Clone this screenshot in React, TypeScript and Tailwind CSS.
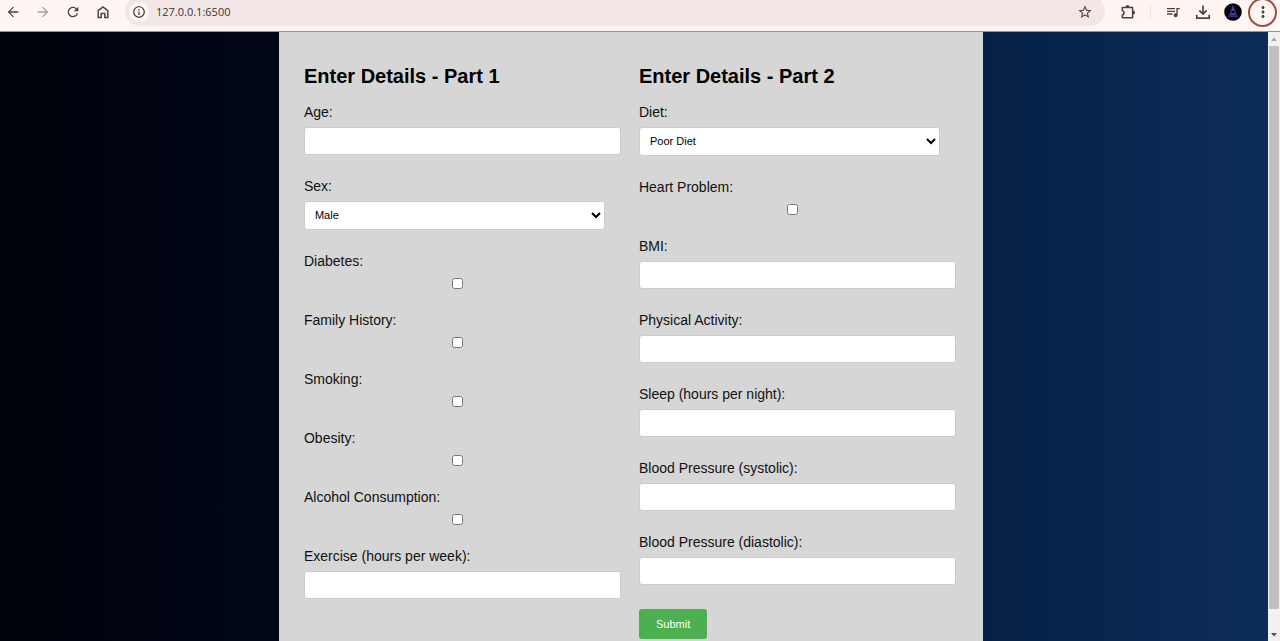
import React from "react";
import { MdArrowBack, MdArrowForward, MdRefresh, MdInfoOutline, MdStarBorder, MdQueueMusic, MdMoreVert } from "react-icons/md";

type FieldKind = "text" | "select" | "checkbox";

interface FieldSpec {
  id: string;
  label: string;
  kind: FieldKind;
  options?: string[];
}

const partOne: FieldSpec[] = [
  { id: "age", label: "Age:", kind: "text" },
  { id: "sex", label: "Sex:", kind: "select", options: ["Male", "Female"] },
  { id: "diabetes", label: "Diabetes:", kind: "checkbox" },
  { id: "family-history", label: "Family History:", kind: "checkbox" },
  { id: "smoking", label: "Smoking:", kind: "checkbox" },
  { id: "obesity", label: "Obesity:", kind: "checkbox" },
  { id: "alcohol", label: "Alcohol Consumption:", kind: "checkbox" },
  { id: "exercise", label: "Exercise (hours per week):", kind: "text" },
];

const partTwo: FieldSpec[] = [
  { id: "diet", label: "Diet:", kind: "select", options: ["Poor Diet", "Average Diet", "Healthy Diet"] },
  { id: "heart-problem", label: "Heart Problem:", kind: "checkbox" },
  { id: "bmi", label: "BMI:", kind: "text" },
  { id: "activity", label: "Physical Activity:", kind: "text" },
  { id: "sleep", label: "Sleep (hours per night):", kind: "text" },
  { id: "systolic", label: "Blood Pressure (systolic):", kind: "text" },
  { id: "diastolic", label: "Blood Pressure (diastolic):", kind: "text" },
];

function Field({ id, label, kind, options = [] }: FieldSpec) {
  return (
    <div className="mb-[21px] flex flex-col">
      <label htmlFor={id} className="mb-[5px] text-sm leading-5 text-[#111]">
        {label}
      </label>
      {kind === "text" && (
        <input id={id} type="text" className="h-7 w-full rounded-[3px] border border-[#ccc] bg-white px-2 text-[11px]" />
      )}
      {kind === "select" && (
        <select id={id} className="h-[29px] w-[95%] rounded-[3px] border border-[#ccc] bg-white pr-1 pb-px pl-1.5 text-[11px] text-black">
          {options.map((o) => (
            <option key={o}>{o}</option>
          ))}
        </select>
      )}
      {kind === "checkbox" && (
        <div className="flex h-[13px] w-[97%] items-end justify-center">
          <input id={id} type="checkbox" className="size-[11px]" />
        </div>
      )}
    </div>
  );
}

function Column({ title, fields, children }: { title: string; fields: FieldSpec[]; children?: React.ReactNode }) {
  return (
    <section className="min-w-0">
      <h2 className="mb-3.5 text-xl leading-6 font-bold text-black">{title}</h2>
      {fields.map((f) => (
        <Field key={f.id} {...f} />
      ))}
      {children}
    </section>
  );
}

function HomeIcon() {
  return (
    <svg viewBox="0 0 16 16" className="size-4" fill="none" stroke="currentColor" strokeWidth="1.5">
      <path d="M3.2 6.600 8 2.900l4.800 3.700V13.400H9.800V9.400H6.200v4H3.200z" />
    </svg>
  );
}

function ExtensionIcon() {
  return (
    <svg viewBox="0 0 16 16" className="size-4" fill="none" stroke="currentColor" strokeWidth="1.500" strokeLinejoin="round">
      <path d="M2.300 3.500H12.600V13.800H2.300V10.900C4.700 10.500 4.700 6.800 2.300 6.400z" />
      <path d="M5.500 3.200a2 2.200 0 0 1 4 0zM12.900 6.600a2.200 2 0 0 1 0 4z" fill="currentColor" stroke="none" />
    </svg>
  );
}

function DownloadIcon() {
  return (
    <svg viewBox="0 0 16 16" className="size-4" fill="none" stroke="currentColor" strokeWidth="1.700">
      <path d="M8 1.500v8.300M4.300 6.300 8 10l3.700-3.700M1.800 10.800v3.300h12.400v-3.300" />
    </svg>
  );
}

function ProfilePicture() {
  return (
    <svg viewBox="0 0 18 18" className="size-[18px]">
      <circle cx="9" cy="9" r="8.800" fill="#06050f" />
      <path d="M9 3.200 6.200 11.500h5.600z" fill="none" stroke="#37358c" strokeWidth="1.300" />
      <path d="M4.500 13.200h9M6 10.500h6" stroke="#4442a5" strokeWidth="1.200" />
      <circle cx="9" cy="6.500" r="1" fill="#8a5c91" />
    </svg>
  );
}

function BrowserBar() {
  return (
    <header className="flex h-8 shrink-0 items-start overflow-hidden border-b border-[#9b9290] bg-[#fff6f4] text-[#55403b]">
      <nav className="flex h-6 w-[125px] shrink-0 items-center gap-3.5 pl-[5px]">
        <button aria-label="Back"><MdArrowBack className="size-4" /></button>
        <button aria-label="Forward" className="text-[#a59b98]"><MdArrowForward className="size-4" /></button>
        <button aria-label="Reload"><MdRefresh className="size-4" /></button>
        <button aria-label="Home"><HomeIcon /></button>
      </nav>
      <div className="-mt-1 flex h-[30px] min-w-0 flex-1 items-center rounded-full bg-[#f2e6e6] pt-0.5 pr-3 pl-1">
        <button aria-label="Site information" className="flex size-5 shrink-0 items-center justify-center rounded-full bg-[#fff6f4] text-[#3b2f2d]">
          <MdInfoOutline className="size-3.5" />
        </button>
        <input
          aria-label="Address"
          defaultValue="127.0.0.1:6500"
          className="ml-[7px] min-w-0 flex-1 bg-transparent font-['Open_Sans',sans-serif] text-[11px] leading-4 text-[#3e3230] outline-none"
        />
        <button aria-label="Bookmark"><MdStarBorder className="size-4" /></button>
      </div>
      <div className="flex h-6 shrink-0 items-center pr-[3px] pl-[15px]">
        <button aria-label="Extensions"><ExtensionIcon /></button>
        <span className="mx-3.5 h-3.5 w-px bg-[#fadcd6]" />
        <button aria-label="Media" className="mr-3.5"><MdQueueMusic className="size-4" /></button>
        <button aria-label="Downloads" className="mr-[13px]"><DownloadIcon /></button>
        <button aria-label="Profile" className="mr-1.5"><ProfilePicture /></button>
        <button aria-label="Menu" className="flex size-[29px] items-center justify-center rounded-full border-2 border-[#98503f]">
          <MdMoreVert className="size-[18px]" />
        </button>
      </div>
    </header>
  );
}

function ScrollTrack() {
  return (
    <div className="flex w-3 shrink-0 flex-col items-center bg-[#f1f1f1]">
      <svg viewBox="0 0 12 14" className="h-3.5 w-3 shrink-0"><path d="M3 9h6L6 5.500z" fill="#a3a3a3" /></svg>
      <div className="w-2.5 flex-1 bg-[#c1c1c1]" />
      <svg viewBox="0 0 12 32" className="h-8 w-3 shrink-0"><path d="M3 24h6l-3 3.500z" fill="#505050" /></svg>
    </div>
  );
}

export default function App() {
  return (
    <div className="flex h-screen flex-col overflow-hidden font-['Liberation_Sans',Arial,sans-serif]">
      <BrowserBar />
      <div className="flex min-h-0 flex-1">
        <main className="min-w-0 flex-1 overflow-hidden bg-linear-to-r from-[#00020a] to-[#0c2c59]">
          <form
            onSubmit={(e) => e.preventDefault()}
            className="ml-[22%] grid min-h-full max-w-[704px] grid-cols-2 gap-[18px] bg-[#d6d6d6] pt-8 pr-[27px] pl-[25px]"
          >
            <Column title="Enter Details - Part 1" fields={partOne} />
            <Column title="Enter Details - Part 2" fields={partTwo}>
              <button type="submit" className="mt-[3px] h-[30px] rounded-[3px] bg-[#4caf50] px-[17px] text-[11px] text-white">
                Submit
              </button>
            </Column>
          </form>
        </main>
        <ScrollTrack />
      </div>
    </div>
  );
}
